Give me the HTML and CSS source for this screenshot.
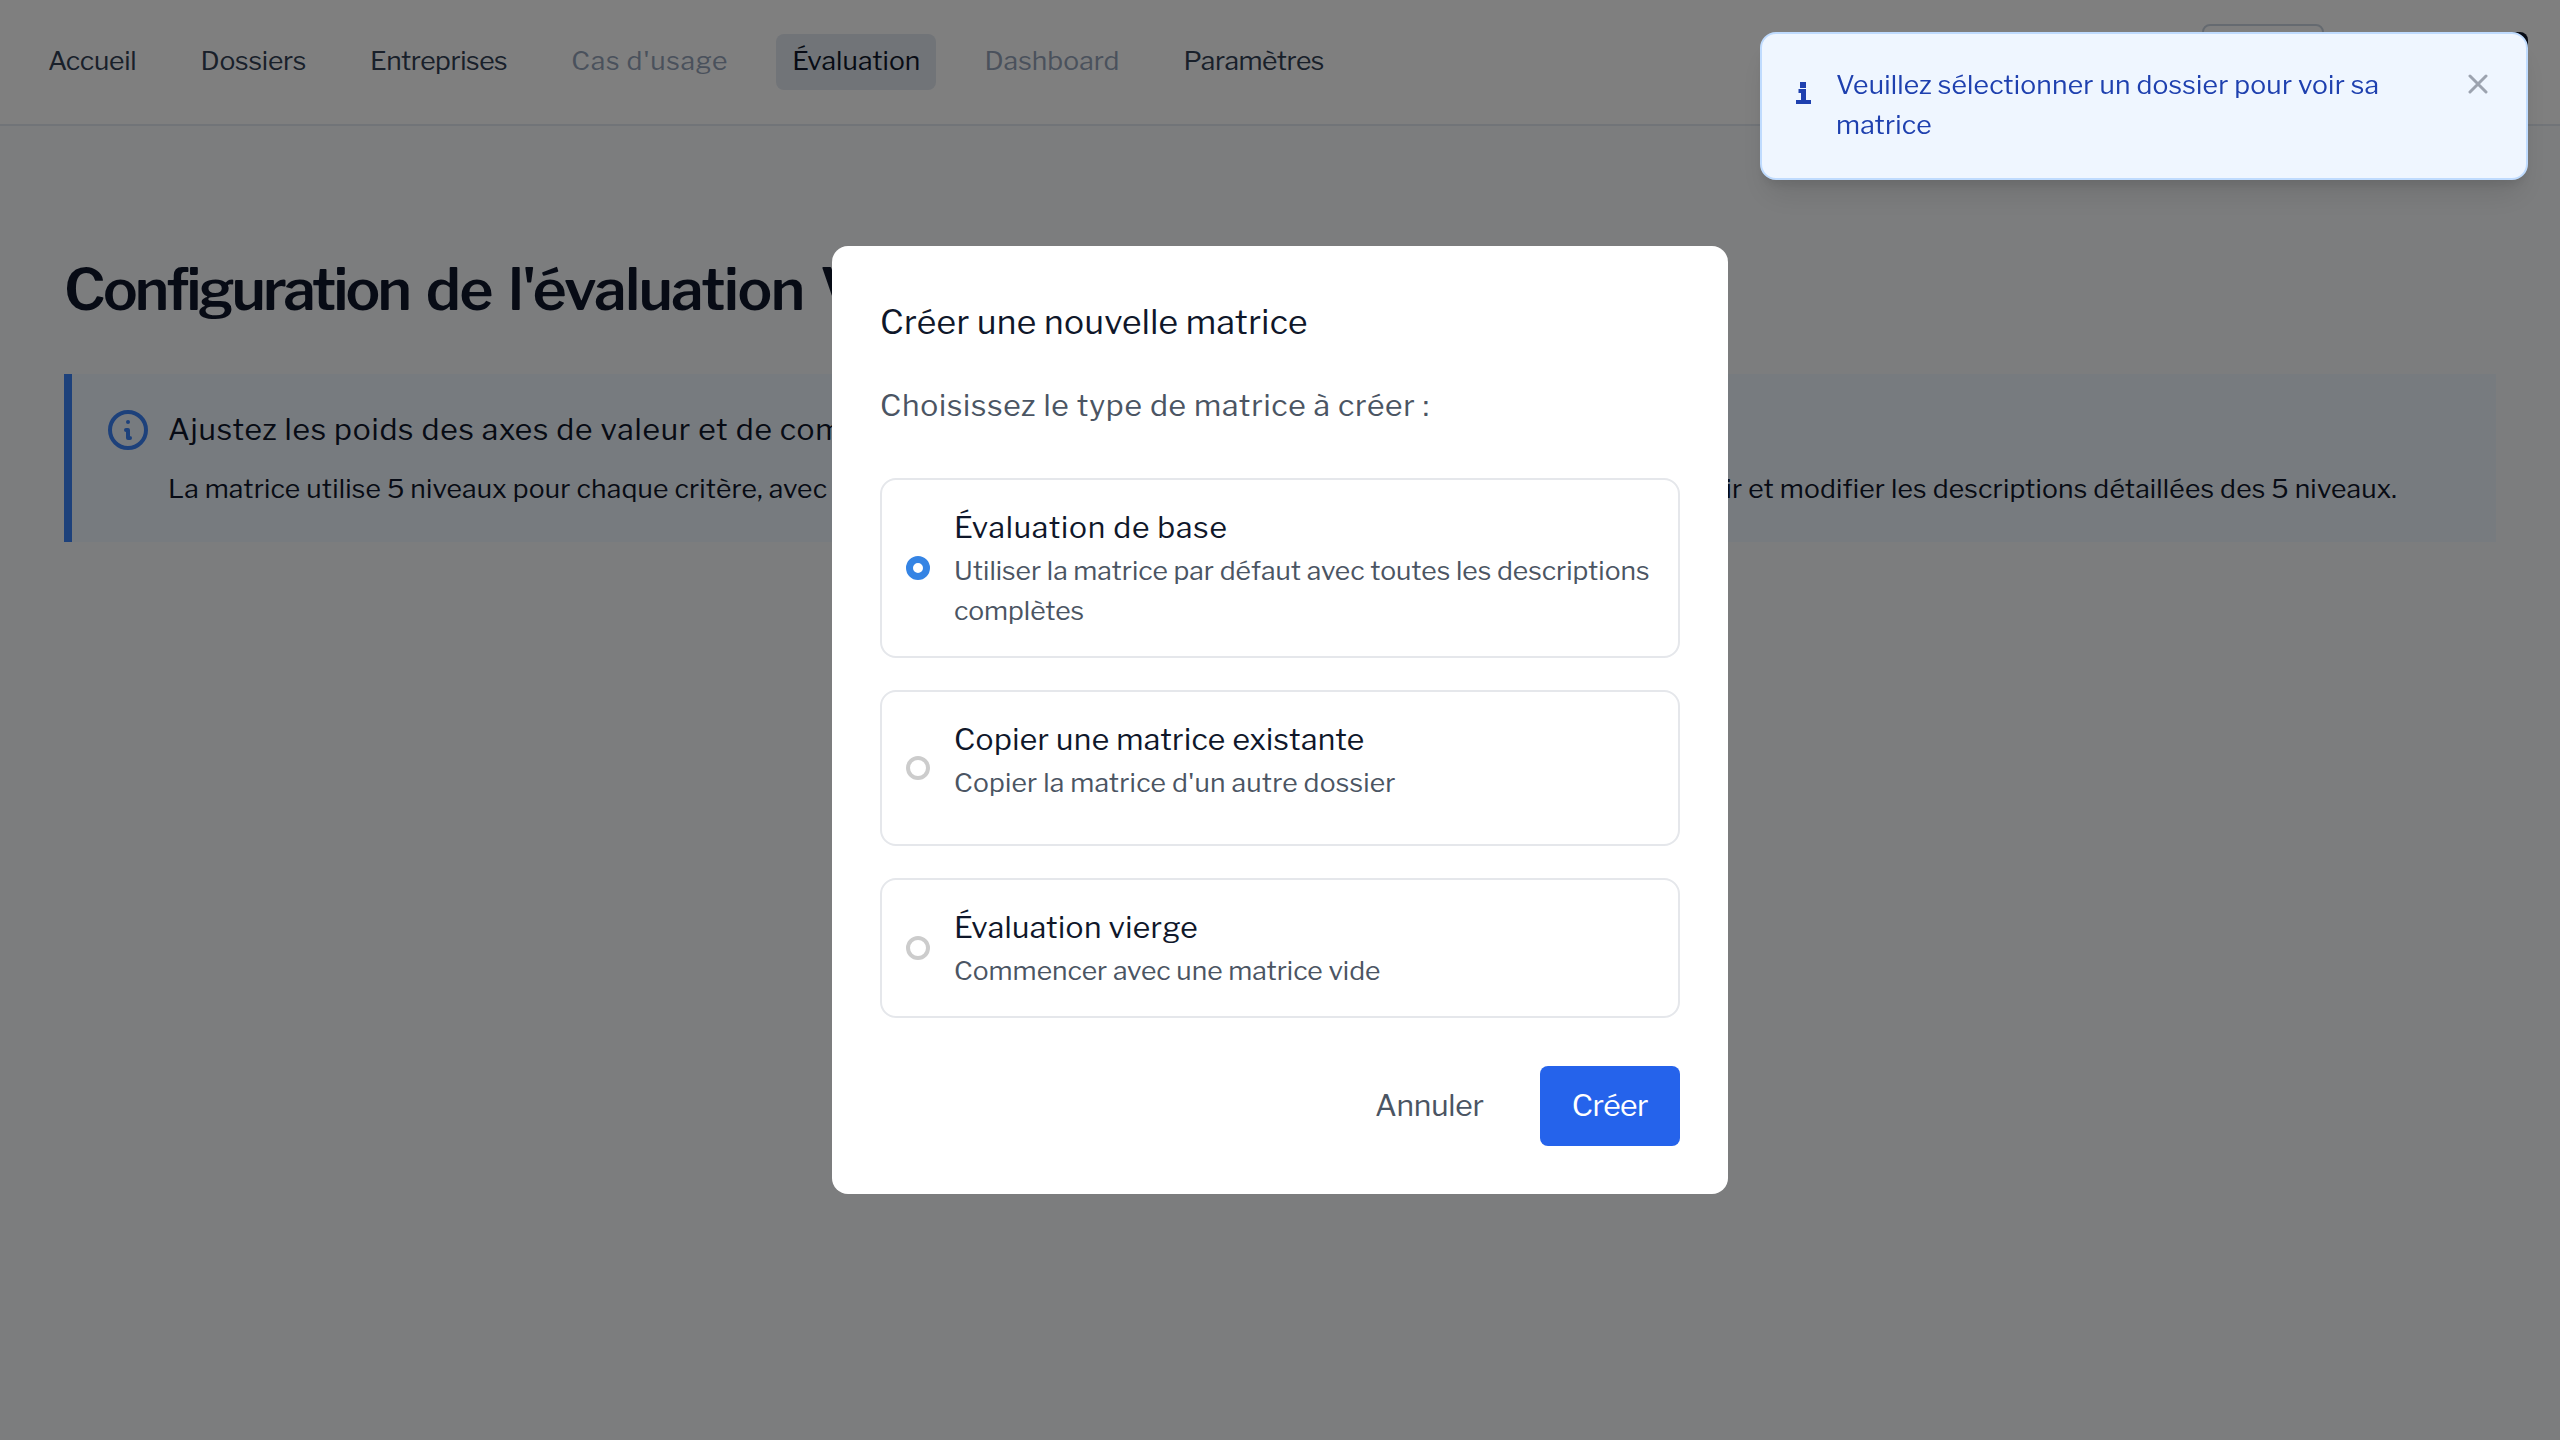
FILE: index.html
```html
<!DOCTYPE html>
<html lang="fr">
<head>
<meta charset="utf-8">
<title>Configuration de l'évaluation</title>
<link rel="stylesheet" href="styles.css">
</head>
<body>
<header class="topbar">
  <nav class="nav">
    <a class="nav-item">Accueil</a>
    <a class="nav-item">Dossiers</a>
    <a class="nav-item is-tight">Entreprises</a>
    <a class="nav-item is-disabled is-wide">Cas d'usage</a>
    <a class="nav-item is-active">Évaluation</a>
    <a class="nav-item is-disabled">Dashboard</a>
    <a class="nav-item is-tight">Paramètres</a>
  </nav>
  <div class="topbar-actions">
    <div class="lang-select"></div>
    <div class="login-button"></div>
  </div>
</header>

<main class="page">
  <h1 class="page-title"><span class="title-lead">Configuration</span> de l'évaluation Valeur/Complexité</h1>
  <section class="notice">
    <svg class="notice-icon" viewBox="0 0 24 24" fill="none" stroke="currentColor" stroke-width="2" stroke-linecap="round" stroke-linejoin="round"><path d="M13 16h-1v-4h-1m1-4h.01M21 12a9 9 0 11-18 0 9 9 0 0118 0z"/></svg>
    <div class="notice-body">
      <p class="text-base">Ajustez les poids des axes de valeur et de complexité, ainsi que les seuils.</p>
      <p class="text-sm notice-detail"><span>La matrice utilise 5 niveaux pour chaque critère, avec</span><span>des points selon la suite de Fibonacci. Cliquez sur chaque critère pour</span><span>voir et modifier les descriptions détaillées des 5 niveaux.</span></p>
    </div>
  </section>
</main>

<div class="overlay">
  <div class="modal">
    <h3 class="modal-title">Créer une nouvelle matrice</h3>
    <p class="modal-lead text-base">Choisissez le type de matrice à créer :</p>
    <div class="options">
      <label class="option">
        <span class="radio is-checked"></span>
        <span class="option-body">
          <span class="option-name text-base">Évaluation de base</span>
          <span class="option-desc is-tight text-sm">Utiliser la matrice par défaut avec toutes les descriptions complètes</span>
        </span>
      </label>
      <label class="option">
        <span class="radio"></span>
        <span class="option-body has-extra">
          <span class="option-name is-tight text-base">Copier une matrice existante</span>
          <span class="option-desc text-sm">Copier la matrice d'un autre dossier</span>
        </span>
      </label>
      <label class="option">
        <span class="radio"></span>
        <span class="option-body">
          <span class="option-name is-tight text-base">Évaluation vierge</span>
          <span class="option-desc is-tight text-sm">Commencer avec une matrice vide</span>
        </span>
      </label>
    </div>
    <div class="modal-actions">
      <button class="button text-base">Annuler</button>
      <button class="button button-primary text-base">Créer</button>
    </div>
  </div>
</div>

<div class="toast">
  <svg class="toast-icon" viewBox="0 0 15 22" fill="currentColor"><path d="M4 0h6v6H4zM2.500 7H10v11h5v4H0v-4h5v-7H2.500z"/></svg>
  <p class="toast-text text-sm">Veuillez sélectionner un dossier pour voir sa matrice</p>
  <svg class="toast-close" viewBox="0 0 20 20" fill="none" stroke="currentColor" stroke-width="3" stroke-linecap="round"><path d="M2 2l16 16M18 2L2 18"/></svg>
</div>
</body>
</html>
```
FILE: styles.css
```css
* { box-sizing: border-box; margin: 0; padding: 0; }

body {
  min-height: 1440px;
  overflow: hidden;
  background: #f8fafc;
  color: #0f172a;
  font-family: "Libre Franklin", "Liberation Sans", sans-serif;
  font-weight: 380;
}

.text-base { padding-bottom: 2px; font-size: 30px; line-height: 46px; letter-spacing: 0.77px; }
.text-sm { margin-top: -1px; padding-bottom: 1px; font-size: 26.5px; line-height: 40px; letter-spacing: 0.18px; }

/* Top bar */
.topbar {
  display: flex;
  justify-content: space-between;
  align-items: center;
  height: 126px;
  padding: 0 32px;
  background: #fff;
  border-bottom: 2px solid #e2e8f0;
}
.nav { display: flex; gap: 32px; }
.nav-item {
  padding: 7px 16px 9px;
  border-radius: 8px;
  color: #334155;
  font-size: 26.5px;
  line-height: 40px;
  letter-spacing: -0.22px;
}
.nav-item.is-disabled { color: #94a3b8; letter-spacing: 0.05px; }
.nav-item.is-active { background: #e2e8f0; color: #0f172a; letter-spacing: 0.08px; }
.nav-item.is-tight { letter-spacing: -0.45px; }
.nav-item.is-wide { letter-spacing: 0.72px; }
.topbar-actions { display: flex; align-items: center; gap: 116px; }
.lang-select { width: 122px; height: 76px; border: 2px solid #cbd5e1; border-radius: 8px; }
.login-button { width: 88px; height: 60px; border-radius: 8px; background: #0f172a; }

/* Page */
.page { padding: 128px 64px 0; }
.page-title {
  margin-bottom: 48px;
  padding-bottom: 2px;
  font-size: 58px;
  font-weight: 640;
  line-height: 70px;
  letter-spacing: -1.45px;
  word-spacing: 6px;
  white-space: nowrap;
}
.title-lead { letter-spacing: -2.8px; }
.notice {
  display: flex;
  gap: 16px;
  height: 168px;
  padding: 32px;
  border-left: 8px solid #3b82f6;
  background: #eff6ff;
}
.notice-icon { flex: none; width: 48px; height: 48px; color: #3b82f6; }
.notice-detail { display: flex; justify-content: space-between; width: 2229px; margin-top: 15px; white-space: nowrap; }

/* Dialog */
.overlay {
  position: fixed;
  inset: 0;
  display: flex;
  align-items: center;
  justify-content: center;
  background: rgba(0, 0, 0, 0.5);
}
.modal {
  width: 896px;
  padding: 48px;
  border-radius: 16px;
  background: #fff;
}
.modal-title {
  margin-bottom: 32px;
  font-size: 33.5px;
  font-weight: 380;
  line-height: 56px;
  letter-spacing: 0.35px;
}
.modal-lead { margin-bottom: 48px; color: #4b5563; }
.options { display: flex; flex-direction: column; gap: 32px; }
.option {
  display: flex;
  align-items: center;
  gap: 24px;
  padding: 24px;
  border: 2px solid #e5e7eb;
  border-radius: 16px;
}
.option-body { display: flex; flex-direction: column; }
.option-body.has-extra { padding-bottom: 16px; }
.option-name.is-tight { letter-spacing: 0.35px; }
.option-desc { color: #4b5563; }
.option-desc.is-tight { letter-spacing: 0; }
.radio {
  flex: none;
  width: 24px;
  height: 24px;
  border: 4px solid #ccc;
  border-radius: 50%;
  background: #fff;
}
.radio.is-checked { border: 7px solid #3584e4; }
.modal-actions { display: flex; justify-content: flex-end; gap: 24px; margin-top: 48px; }
.modal-actions .button {
  height: 80px;
  padding: 16px 32px 18px;
  border: 0;
  border-radius: 8px;
  background: none;
  color: #4b5563;
  font-family: inherit;
  font-weight: 380;
  letter-spacing: -0.2px;
}
.modal-actions .button-primary { background: #2563eb; color: #fff; font-weight: 450; letter-spacing: -0.5px; }

/* Toast */
.toast {
  position: fixed;
  top: 32px;
  right: 32px;
  display: flex;
  align-items: flex-start;
  width: 768px;
  height: 148px;
  padding: 32px;
  border: 2px solid #bfdbfe;
  border-radius: 16px;
  background: #eff6ff;
  color: #1e40af;
  box-shadow: 0 20px 30px -6px rgba(0, 0, 0, 0.1), 0 8px 12px -4px rgba(0, 0, 0, 0.1);
}
.toast-icon { flex: none; width: 15px; height: 22px; margin: 16px 25px 0 2px; }
.toast-text { flex: 1; }
.toast-close { flex: none; width: 20px; height: 20px; margin: 8px 6px 0 60px; color: #9ca3af; }
```
